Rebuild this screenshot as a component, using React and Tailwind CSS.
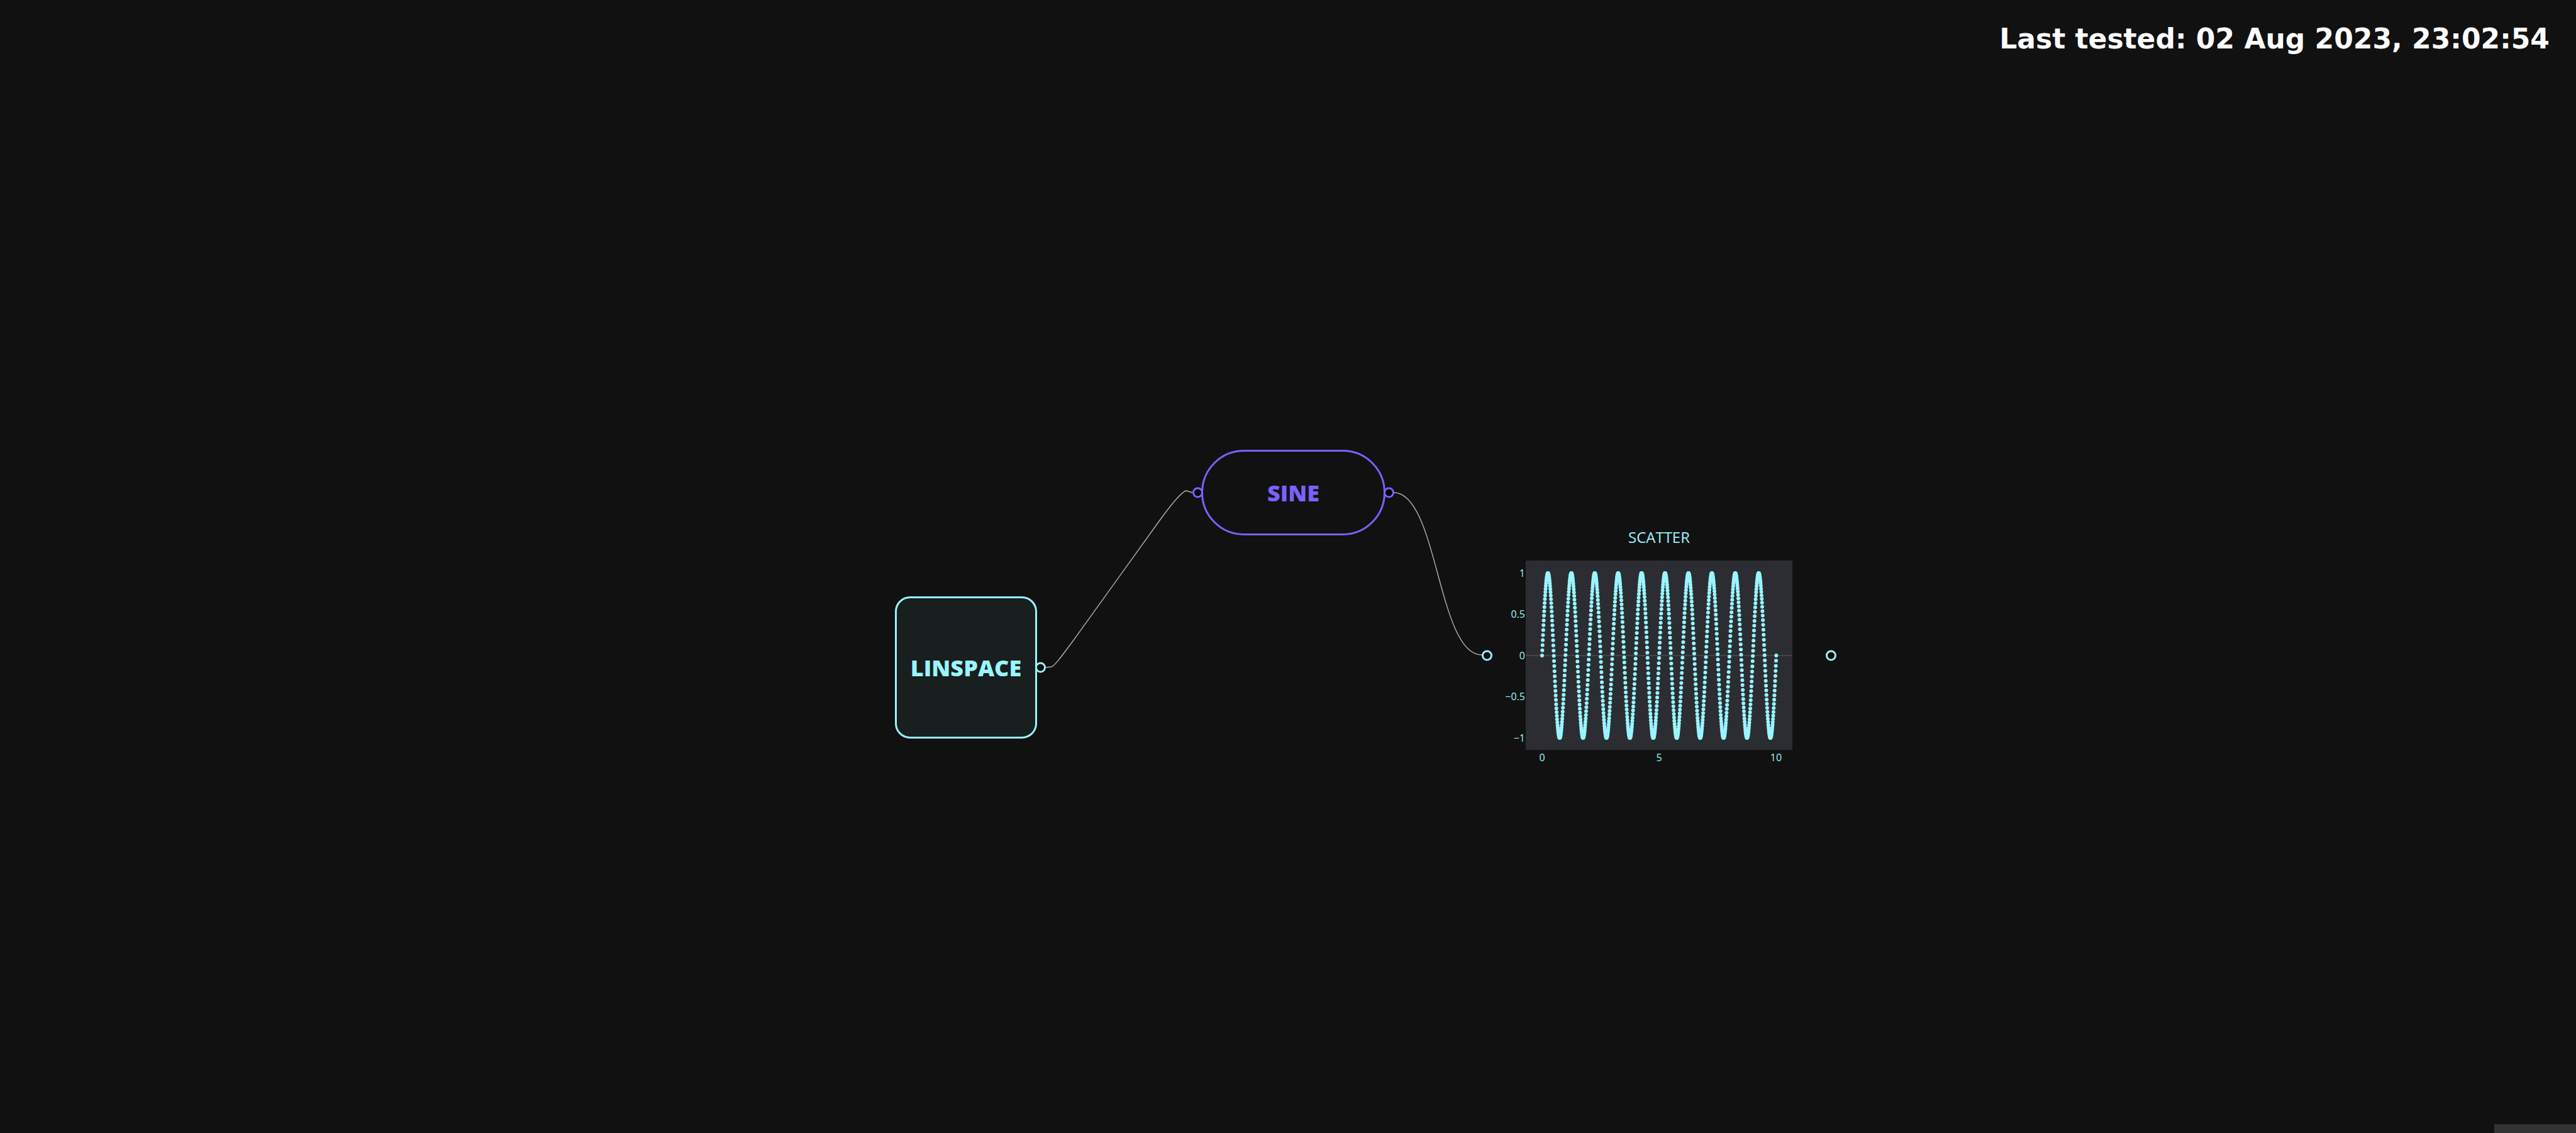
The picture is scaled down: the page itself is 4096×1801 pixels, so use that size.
const POINT_COUNT = 1000;
const PLOT = { x0: 52, y0: 151, unitX: 37.24, unitY: 131 };

const points = Array.from({ length: POINT_COUNT }, (_, i) => {
  const x = (10 * i) / (POINT_COUNT - 1);
  return {
    cx: PLOT.x0 + x * PLOT.unitX,
    cy: PLOT.y0 - Math.sin(2 * Math.PI * x) * PLOT.unitY,
  };
});

const yTicks = [
  { label: "1", y: 20 },
  { label: "0.5", y: 85 },
  { label: "0", y: 151 },
  { label: "−0.5", y: 216 },
  { label: "−1", y: 282 },
];

const xTicks = [
  { label: "0", x: 52 },
  { label: "5", x: 238 },
  { label: "10", x: 424 },
];

function Handle({ className }) {
  return (
    <span
      className={`absolute top-1/2 size-[17px] -translate-y-1/2 rounded-full border-3 bg-black ${className}`}
    />
  );
}

function Edges() {
  return (
    <svg
      className="absolute inset-0 size-full"
      fill="none"
      stroke="#b1b1b1"
      strokeWidth="1.4"
      aria-hidden="true"
    >
      <path d="M1662 1061L1672 1060C1677 1058 1686 1046 1706 1019L1847 823C1861 804 1879 782 1886 780L1896 783" />
      <path d="M2216 783C2286 783 2286 1041 2356 1041" />
    </svg>
  );
}

function ScatterPlot() {
  return (
    <svg
      className="block w-[500px]"
      viewBox="-12 0 500 330"
      role="img"
      aria-label="Scatter plot of a sine wave"
    >
      <rect x="26" y="0" width="424" height="301" fill="#2c2d32" />
      <g stroke="#303136" strokeWidth="1">
        {yTicks.map((t) => (
          <line key={t.label} x1="26" x2="450" y1={t.y} y2={t.y} />
        ))}
        {xTicks.map((t) => (
          <line key={t.label} x1={t.x} x2={t.x} y1="0" y2="301" />
        ))}
      </g>
      <line x1="26" x2="450" y1="151" y2="151" stroke="#444444" strokeWidth="2" />
      <g fill="#99f5ff">
        {points.map((p, i) => (
          <circle key={i} cx={p.cx} cy={p.cy} r="3" />
        ))}
      </g>
      <g className="text-base" fill="#99f5ff" textAnchor="end">
        {yTicks.map((t) => (
          <text key={t.label} x="25" y={t.y + 6}>
            {t.label}
          </text>
        ))}
      </g>
      <g className="text-base" fill="#99f5ff" textAnchor="middle">
        {xTicks.map((t) => (
          <text key={t.label} x={t.x} y="319">
            {t.label}
          </text>
        ))}
      </g>
    </svg>
  );
}

export default function App() {
  return (
    <div className="relative flex min-h-screen flex-col overflow-hidden bg-[#111111] font-['Open_Sans','Noto_Sans',sans-serif]">
      <header className="flex justify-end px-[42px] py-9">
        <h1 className="font-['DejaVu_Sans',sans-serif] text-[44px] leading-[52px] font-bold text-white">
          Last tested: 02 Aug 2023, 23:02:54
        </h1>
      </header>

      <main className="absolute inset-0">
        <Edges />

        <div className="absolute top-[948px] left-[1423px] flex size-[226px] items-center justify-center rounded-3xl border-3 border-[#99f5ff] bg-[#191e1e] pt-0.5 text-4xl leading-none font-extrabold text-[#99f5ff]">
          LINSPACE
          <Handle className="-right-[17px] border-[#99f5ff]" />
        </div>

        <div className="absolute top-[715px] left-[1910px] flex h-[136px] w-[293px] items-center justify-center rounded-full border-3 border-[#7b61ff] pt-0.5 text-4xl leading-none font-extrabold text-[#7b61ff]">
          <Handle className="-left-[17px] border-[#7b61ff]" />
          SINE
          <Handle className="-right-[17px] border-[#7b61ff]" />
        </div>

        <figure className="absolute top-[838px] left-[2356px] flex h-[407px] w-[564px] flex-col items-center text-[#99f5ff]">
          <Handle className="left-0 border-[#99f5ff]" />
          <figcaption className="text-2xl leading-[32px]">SCATTER</figcaption>
          <div className="mt-[21px]">
            <ScatterPlot />
          </div>
          <Handle className="right-0 border-[#99f5ff]" />
        </figure>
      </main>

      <footer className="relative mt-auto ml-auto h-3.5 w-[130px] bg-[#333333]" />
    </div>
  );
}
